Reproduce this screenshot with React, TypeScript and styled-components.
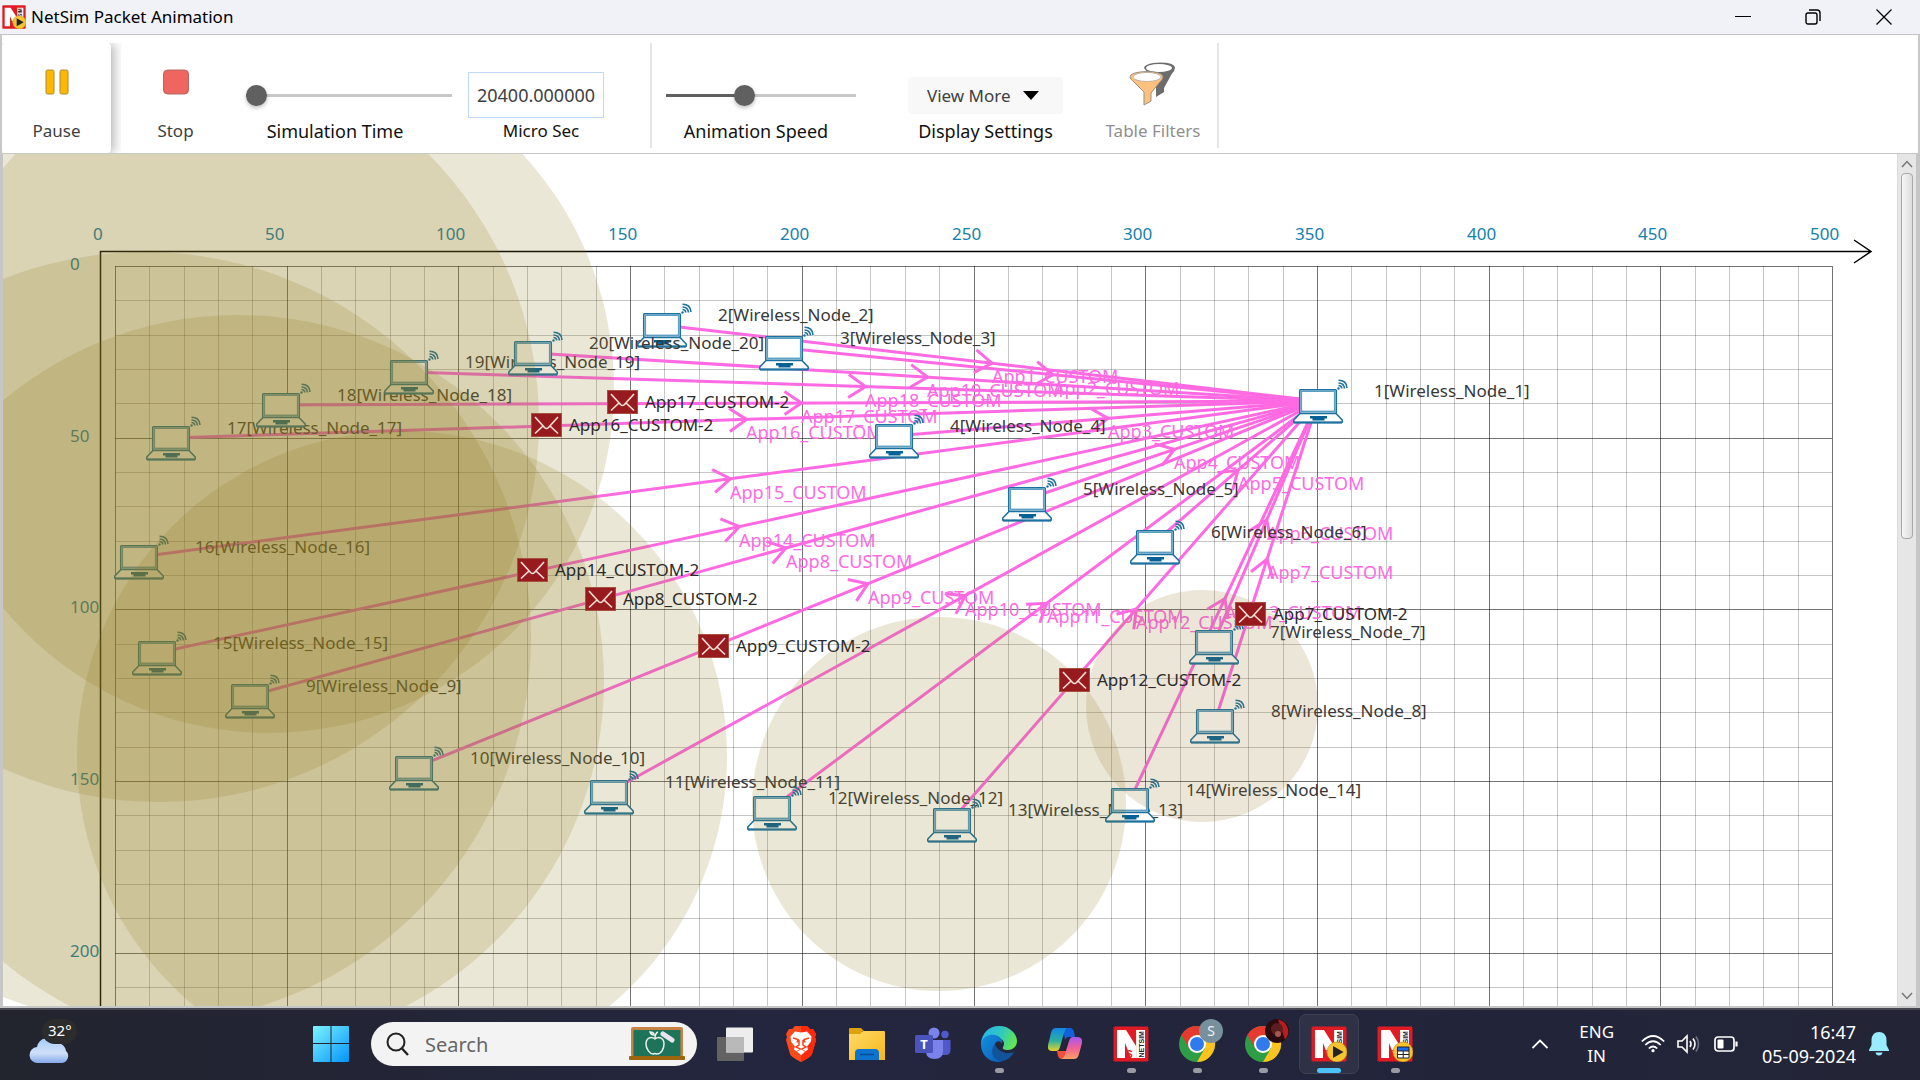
import React from "react";
import styled, { createGlobalStyle } from "styled-components";

const Global = createGlobalStyle`
  * { box-sizing: border-box; }
  body { margin: 0; font-family: "Noto Sans", "Open Sans", sans-serif; font-size: 17px; color: #1a1a1a; overflow: hidden; }
  button, input, select { font: inherit; color: inherit; }
`;

const Screen = styled.div`
  display: flex;
  flex-direction: column;
  height: 100vh;
  background: #fff;
`;

/* ---------- title bar ---------- */

const TitleBar = styled.header`
  display: flex;
  align-items: center;
  height: 35px;
  padding-left: 2px;
  background: #f0f2f8;
  border-bottom: 1px solid #c4c4c8;
`;

const Title = styled.h1`
  flex: 1;
  margin: 0 0 0 5px;
  font-size: 17px;
  line-height: 24px;
  font-weight: 400;
  color: #000;
`;

const WindowButton = styled.button`
  display: grid;
  place-items: center;
  width: 70px;
  height: 34px;
  padding: 0;
  border: 0;
  background: none;
  &:last-child { width: 72px; }
`;

/* ---------- toolbar ---------- */

const Toolbar = styled.section`
  display: flex;
  height: 119px;
  padding-top: 8px;
  border: solid #c8c8c8;
  border-width: 0 2px 1px 2px;
  background: #fff;
`;

const ToolButton = styled.button<{ $raised?: boolean; $wide?: boolean }>`
  display: flex;
  flex-direction: column;
  align-items: center;
  justify-content: space-between;
  width: ${(p) => (p.$wide ? 128 : 109)}px;
  padding: 18px 0 10px;
  border: 0;
  border-radius: 4px;
  background: #fff;
  color: #404040;
  line-height: 24px;
  box-shadow: ${(p) => (p.$raised ? "3px 0 12px rgba(0, 0, 0, 0.3)" : "none")};
  clip-path: inset(0 -12px 0 0);
  &:disabled { color: #8f8f8f; }
`;

const ToolCell = styled.div<{ $gap: number }>`
  display: flex;
  margin-left: ${(p) => p.$gap}px;
`;

const Field = styled.div<{ $width: number; $gap: number }>`
  display: flex;
  flex-direction: column;
  justify-content: flex-end;
  width: ${(p) => p.$width}px;
  margin-left: ${(p) => p.$gap}px;
  padding-bottom: 10px;
`;

const Control = styled.div`
  display: grid;
  align-items: center;
  height: 48px;
`;

const Caption = styled.label<{ $left?: number; $right?: number; $small?: boolean }>`
  padding: 0 ${(p) => p.$right || 0}px 0 ${(p) => p.$left || 0}px;
  font-size: ${(p) => (p.$small ? 17 : 18)}px;
  line-height: 24px;
  text-align: center;
  white-space: nowrap;
  color: #111;
`;

const Slider = styled.input<{ $fill: number }>`
  appearance: none;
  width: 100%;
  height: 22px;
  margin: 0;
  background: linear-gradient(
      to right,
      #606060 ${(p) => p.$fill}%,
      #c8c8c8 ${(p) => p.$fill}%
    )
    center / 100% 3px no-repeat;
  &::-webkit-slider-thumb {
    appearance: none;
    width: 21px;
    height: 21px;
    border-radius: 50%;
    background: #606060;
    box-shadow: 0 2px 4px rgba(0, 0, 0, 0.25);
  }
`;

const TimeInput = styled.input`
  width: 100%;
  height: 46px;
  padding: 0;
  border: 1px solid #c0d8fb;
  background: #fff;
  color: #404040;
  font-size: 18px;
  text-align: center;
`;

const SelectBox = styled.div`
  display: grid;
  grid-template-columns: 1fr 40px;
  align-items: center;
  height: 37px;
  border-radius: 4px;
  background: #f8f8f8;
`;

const Select = styled.select`
  grid-area: 1 / 1 / 2 / 3;
  height: 37px;
  padding: 0 0 0 19px;
  border: 0;
  background: none;
  appearance: none;
  color: #404040;
`;

const SelectArrow = styled.svg`
  grid-area: 1 / 2 / 2 / 3;
  pointer-events: none;
`;

const Divider = styled.div<{ $gap: number }>`
  width: 2px;
  height: 105px;
  margin-left: ${(p) => p.$gap}px;
  background: #e6e6e6;
`;

/* ---------- workspace ---------- */

const Workspace = styled.main`
  display: flex;
  flex: 1;
  min-height: 0;
  border: solid #c6c6c8;
  border-width: 0 4px 2px 3px;
`;

const Canvas = styled.div`
  position: relative;
  flex: 1;
  overflow: hidden;
`;

const Layer = styled.svg`
  position: absolute;
  inset: 0;
  width: 100%;
  height: 100%;
  pointer-events: none;
`;

const Placed = styled.div.attrs<{ $x: number; $y: number }>((p) => ({
  style: { left: p.$x, top: p.$y },
}))<{ $x: number; $y: number }>`
  position: absolute;
  display: flex;
  white-space: nowrap;
  line-height: 24px;
`;

const NodeItem = styled(Placed)`
  gap: 26px;
  color: #383838;
`;

const PacketItem = styled(Placed)`
  gap: 7px;
  color: #2b2b2b;
`;

const LinkLabel = styled(Placed)`
  color: #ff6ae3;
  font-size: 18px;
`;

const AxisLabel = styled(Placed)`
  color: #1480ab;
`;

const ScrollTrack = styled.div`
  display: flex;
  flex-direction: column;
  width: 19px;
  padding: 1px 2px;
  background: #e6e6e6;
  border-left: 1px solid #dadada;
`;

const ScrollButton = styled.button`
  display: grid;
  place-items: center;
  height: 18px;
  padding: 0;
  border: 0;
  background: none;
`;

const ScrollRun = styled.div`
  flex: 1;
`;

const ScrollThumb = styled.div`
  height: 45%;
  margin: 0 1px;
  border: 1px solid #a8a8a8;
  border-radius: 4px;
  background: linear-gradient(to right, #f6f6f6, #dcdcdc);
`;

/* ---------- taskbar ---------- */

const Taskbar = styled.footer`
  display: flex;
  align-items: center;
  height: 72px;
  padding: 0 31px 2px 28px;
  background: linear-gradient(to right, #22242e, #24263f 40%, #22243a 80%, #232536);
  border-top: 2px solid #45464f;
  color: #fff;
`;

const Weather = styled.button`
  width: 270px;
  padding: 0;
  border: 0;
  background: none;
  text-align: left;
`;

const TaskCell = styled.button<{ $active?: boolean }>`
  display: flex;
  position: relative;
  align-items: center;
  justify-content: center;
  width: 60px;
  height: 60px;
  margin: 0 3px;
  padding: 0;
  border: 1px solid ${(p) => (p.$active ? "#3e4052" : "transparent")};
  border-radius: 7px;
  background: ${(p) => (p.$active ? "#2f3146" : "none")};
`;

const Indicator = styled.span<{ $active?: boolean }>`
  position: absolute;
  bottom: 0;
  width: ${(p) => (p.$active ? 24 : 9)}px;
  height: 5px;
  border-radius: 3px;
  background: ${(p) => (p.$active ? "#4cc2ff" : "#9a9aa4")};
`;

const Search = styled.label`
  display: flex;
  align-items: center;
  width: 326px;
  height: 44px;
  margin: 0 5px 0 7px;
  padding: 0 12px 0 15px;
  border-radius: 22px;
  background: #f3f3f3;
`;

const SearchInput = styled.input`
  flex: 1;
  min-width: 0;
  margin-left: 16px;
  padding: 0;
  border: 0;
  background: none;
  font-size: 20px;
  &::placeholder { color: #666; opacity: 1; }
`;

const Tray = styled.div`
  display: flex;
  align-items: center;
  margin-left: auto;
`;

const TrayButton = styled.button<{ $gap?: number }>`
  display: flex;
  align-items: center;
  margin: 0 0 0 ${(p) => p.$gap || 0}px;
  padding: 0;
  border: 0;
  background: none;
  color: #fff;
`;

const TwoLines = styled.span<{ $right?: boolean }>`
  display: block;
  font-size: ${(p) => (p.$right ? 18 : 17)}px;
  line-height: 24px;
  white-space: pre;
  text-align: ${(p) => (p.$right ? "right" : "center")};
`;

/* ---------- data ---------- */

type Point = { x: number; y: number };

// Screen-top centre of every laptop, in canvas pixels.
const NODES: Point[] = [
  { x: 1315, y: 235 },
  { x: 659, y: 159 },
  { x: 781, y: 182 },
  { x: 891, y: 270 },
  { x: 1024, y: 333 },
  { x: 1152, y: 376 },
  { x: 1211, y: 476 },
  { x: 1212, y: 555 },
  { x: 247, y: 530 },
  { x: 411, y: 602 },
  { x: 606, y: 626 },
  { x: 769, y: 642 },
  { x: 949, y: 654 },
  { x: 1127, y: 634 },
  { x: 154, y: 487 },
  { x: 136, y: 391 },
  { x: 168, y: 272 },
  { x: 278, y: 239 },
  { x: 406, y: 206 },
  { x: 530, y: 187 },
];

const PACKETS = [
  { app: 17, x: 620, y: 248 },
  { app: 16, x: 544, y: 271 },
  { app: 14, x: 530, y: 416 },
  { app: 8, x: 598, y: 445 },
  { app: 9, x: 711, y: 492 },
  { app: 12, x: 1072, y: 526 },
  { app: 7, x: 1248, y: 460 },
];

const RANGES = [
  { x: 266, y: 234, r: 345 },
  { x: 156, y: 268, r: 380 },
  { x: 142, y: 484, r: 386 },
  { x: 235, y: 527, r: 366 },
  { x: 399, y: 602, r: 325 },
  { x: 936, y: 650, r: 187 },
  { x: 1199, y: 552, r: 116, fill: "#94722a" },
];

const GRID = { left: 112, top: 112, step: 34.34, size: 1717 };
const HALF = 12;

function links() {
  const sink = NODES[0];
  return NODES.slice(1).map((n, i) => {
    const angle = Math.atan2(sink.y - n.y, sink.x - n.x);
    return {
      app: i + 1,
      from: n,
      angle: (angle * 180) / Math.PI,
      mid: {
        x: (n.x + sink.x) / 2 + 2 * Math.cos(angle),
        y: (n.y + sink.y) / 2 + HALF + 2 * Math.sin(angle),
      },
    };
  });
}

/* ---------- canvas drawings ---------- */

function Laptop() {
  return (
    <svg width="60" height="46" viewBox="0 0 60 46" fill="none" stroke="#1b719f" aria-hidden="true">
      <path d="M12 34.500 5.800 41v1.700q0 .8.800.8h46.800q.8 0 .8-.8V41L48 34.500z" fill="#fff" strokeWidth="1.600" />
      <path d="M6 43.500h48" strokeWidth="1.800" />
      <rect x="11.700" y="10.700" width="36.600" height="23.600" rx=".8" fill="#fff" strokeWidth="1.500" />
      <rect x="13.300" y="12.200" width="33.400" height="20.200" stroke="#5d9fc0" strokeWidth="1.600" />
      <path d="M22 37h17v2.500h-2.500v2h-12v-2H22z" fill="#066296" stroke="none" />
      <circle cx="50.500" cy="9.500" r="1.200" fill="#1b719f" stroke="none" />
      <path d="M50.500 6.500q3 0 3.300 3M50.500 4q5.500 0 6 5.500M50.500 1.300Q58.500 1.300 59 9" strokeWidth="1.600" />
    </svg>
  );
}

function Mail() {
  return (
    <svg width="31" height="24" viewBox="0 0 31 24" aria-hidden="true">
      <rect x=".5" y=".5" width="30" height="23" fill="#971b1e" stroke="#a8503f" />
      <path d="M4 4l9.500 10.500q2 2 4 0L27 4M4 20.500l8.500-8M27 20.500l-8.500-8" fill="none" stroke="#f3ddd4" strokeWidth="1.700" />
    </svg>
  );
}

function Plane() {
  const steps = Array.from({ length: 51 }, (_, i) => i);
  const right = GRID.left + GRID.size;
  const bottom = GRID.top + GRID.size;
  return (
    <Layer aria-hidden="true">
      {steps.map((i) => {
        const major = i % 5 === 0;
        const x = Math.round(GRID.left + i * GRID.step) + 0.5;
        const y = Math.round(GRID.top + i * GRID.step) + 0.5;
        const ink = major ? 0.55 : 0.22;
        return (
          <g key={i} stroke="#000" strokeOpacity={ink}>
            <path d={`M${x} ${GRID.top}V${bottom}`} />
            <path d={`M${GRID.left} ${y}H${right}`} />
          </g>
        );
      })}
      <path d="M97.500 2000V97.500H1867M1851 86l17 11.500L1851 109" fill="none" stroke="#000" strokeWidth="1.500" />
    </Layer>
  );
}

function Links() {
  return (
    <Layer aria-hidden="true">
      <g fill="none" stroke="#ff6ae3" strokeWidth="3">
        {links().map((l) => (
          <g key={l.app}>
            <line x1={l.from.x} y1={l.from.y + HALF} x2={NODES[0].x} y2={NODES[0].y + HALF} />
            <path d="M-17-11.500 0 0-17 11.500" transform={`translate(${l.mid.x} ${l.mid.y}) rotate(${l.angle})`} />
          </g>
        ))}
      </g>
    </Layer>
  );
}

function Ranges() {
  return (
    <Layer aria-hidden="true">
      {RANGES.map((c) => (
        <circle key={c.x} cx={c.x} cy={c.y} r={c.r} fill={c.fill || "#8f791a"} fillOpacity="0.18" />
      ))}
    </Layer>
  );
}

/* ---------- logos ---------- */

function NetSim({ size, badge }: { size: number; badge?: "play" | "table" }) {
  return (
    <svg width={size} height={size} viewBox="0 0 36 36" aria-hidden="true">
      <rect x=".5" y=".5" width="35" height="35" rx="1.500" fill="#e01b24" />
      <path d="M4 4h9l10 16V4h9v28H18L12 17v15H4z" fill="#fff" />
      <path d="M23.500 4v28" stroke="#d9d9d9" strokeWidth=".6" />
      <text transform="translate(30.500 31.500) rotate(-90)" fontSize="7" fontWeight="700" fontFamily="Liberation Sans, sans-serif" fill="#222">
        NETSIM
      </text>
      <text x="13" y="32" fontSize="10" fontWeight="700" fontFamily="Liberation Sans, sans-serif" fill="#e01b24">
        S
      </text>
      {badge && <circle cx="26" cy="26" r="10" fill="#f5c431" stroke="#b98a13" strokeWidth=".6" />}
      {badge === "play" && <path d="M22 20l10.500 6L22 32z" fill="#222" />}
      {badge === "table" && (
        <g>
          <rect x="20" y="20.500" width="12.500" height="12" rx="1" fill="#222" />
          <rect x="21" y="21.500" width="10.500" height="3" fill="#1b6cf2" />
          <path d="M21 25.500h4.700v2.500H21zM26.700 25.500h4.800v2.500h-4.800zM21 29h4.700v2.500H21zM26.700 29h4.800v2.500h-4.800z" fill="#fff" />
        </g>
      )}
    </svg>
  );
}

function CloudWeather() {
  return (
    <svg width="52" height="46" viewBox="0 0 52 46" role="img" aria-label="Weather">
      <defs>
        <linearGradient id="cloud" x1="0" y1="0" x2="0" y2="1">
          <stop offset="0" stopColor="#a9cbfb" />
          <stop offset=".6" stopColor="#cfdff8" />
          <stop offset="1" stopColor="#86a9ea" />
        </linearGradient>
      </defs>
      <circle cx="29" cy="31" r="7" fill="#e8711c" />
      <path d="M10 44a8 8 0 0 1-1-16 11 11 0 0 1 20-4 9 9 0 0 1 9 8 7 7 0 0 1-4 12z" fill="url(#cloud)" />
      <rect x="14" y="0" width="35" height="25" rx="12.500" fill="#2c2c2c" />
      <text x="20" y="17" fontSize="15" fill="#fff">
        32°
      </text>
    </svg>
  );
}

function WindowsLogo() {
  return (
    <svg width="36" height="36" viewBox="0 0 36 36" aria-hidden="true">
      <defs>
        <linearGradient id="win" x1="0" y1="0" x2="1" y2="1">
          <stop offset="0" stopColor="#7df3ff" />
          <stop offset="1" stopColor="#0394fb" />
        </linearGradient>
      </defs>
      <path d="M1 0h16.500v17H0V1q0-1 1-1zM18.500 0H35q1 0 1 1v16H18.500zM0 18h17.500v18H1q-1 0-1-1zM18.500 18H36v17q0 1-1 1H18.500z" fill="url(#win)" />
    </svg>
  );
}

function Blackboard() {
  return (
    <svg width="56" height="34" viewBox="0 0 56 34" aria-hidden="true">
      <rect x="2" y="0" width="52" height="30" rx="2" fill="#c98246" />
      <rect x="4.500" y="3" width="47" height="26" fill="#1f7358" />
      <rect x="0" y="29" width="56" height="4" rx="1" fill="#9c6510" />
      <path d="M26 12c-4-3-9-1-9 5 0 5 4 10 7 10l2-.5 2 .5c4 0 7-5 7-10 0-6-5-8-9-5zM26 11c0-3 1-5 3-6M25 8q-3 0-4-3 4 0 4 3z" fill="none" stroke="#e9f3ee" strokeWidth="1.500" />
      <path d="M34 7l9 6" stroke="#e8e4f0" strokeWidth="5" strokeLinecap="round" />
    </svg>
  );
}

function TaskView() {
  return (
    <svg width="36" height="36" viewBox="0 0 36 36" aria-hidden="true">
      <rect x="0" y="11" width="27" height="24" rx="1" fill="#626262" />
      <rect x="9" y="1.500" width="27" height="25" rx="1" fill="#ededed" />
      <rect x="9" y="11" width="18" height="15.500" fill="#b9b9b9" />
    </svg>
  );
}

function Brave() {
  return (
    <svg width="30" height="36" viewBox="0 0 30 36" aria-hidden="true">
      <path d="M9 0h12l3 3h3l3 5-1 3 1 3-4 14q-1 3-11 8-10-5-11-8L0 14l1-3-1-3 3-5h3z" fill="#fb4b1c" />
      <path d="M15 0h6l3 3h3l3 5-1 3 1 3-4 14q-1 3-11 8z" fill="#ff2a0c" />
      <path d="M15 6.500 21 5.500l4.500 5-.5 5-4 5 1 3-7 5-7-5 1-3-4-5-.5-5L9 5.500z" fill="#fff" />
      <path d="M7 12l5 1.500-1 3M23 12l-5 1.500 1 3M13 14v5l-3 2 5 2.500 5-2.500-3-2v-5M15 24v3" fill="none" stroke="#f8431a" strokeWidth="1.500" />
      <path d="M10.500 25.500 15 23l4.500 2.500L15 29.500z" fill="#fff" stroke="#f8431a" strokeWidth=".8" />
    </svg>
  );
}

function Folder() {
  return (
    <svg width="36" height="34" viewBox="0 0 36 34" aria-hidden="true">
      <defs>
        <linearGradient id="folder" x1="0" y1="0" x2="1" y2="1">
          <stop offset="0" stopColor="#ffdb6b" />
          <stop offset="1" stopColor="#f7b618" />
        </linearGradient>
      </defs>
      <path d="M0 2q0-1 1-1h11l3 3h-2v6H0z" fill="#dfa008" />
      <path d="M0 7h11l3-3h21q1 0 1 1v28H0z" fill="url(#folder)" />
      <path d="M6 33v-7q0-4 4-4h16q4 0 4 4v7z" fill="#0c74cf" />
      <path d="M11 27.500h14" stroke="#0a4c92" strokeWidth="1.500" />
    </svg>
  );
}

function Teams() {
  return (
    <svg width="36" height="34" viewBox="0 0 36 34" aria-hidden="true">
      <circle cx="19" cy="6" r="5.500" fill="#7b83eb" />
      <circle cx="30" cy="7.500" r="3.700" fill="#5059c9" />
      <path d="M26 13h9.500v10q0 5-5 5H26z" fill="#5059c9" />
      <path d="M11 13h17v11q0 8-8.500 8T11 24z" fill="#7b83eb" />
      <rect x="0" y="8" width="18" height="18" rx="1.500" fill="#4b53bc" />
      <text x="9" y="22" fontSize="13" fontWeight="700" textAnchor="middle" fill="#fff">
        T
      </text>
    </svg>
  );
}

function Edge() {
  return (
    <svg width="36" height="36" viewBox="0 0 36 36" aria-hidden="true">
      <defs>
        <linearGradient id="edgeTop" x1="0" y1=".3" x2="1" y2=".6">
          <stop offset="0" stopColor="#2bb5ee" />
          <stop offset=".5" stopColor="#2fc8c0" />
          <stop offset="1" stopColor="#66e84a" />
        </linearGradient>
        <linearGradient id="edgeLow" x1="0" y1="0" x2="1" y2="1">
          <stop offset="0" stopColor="#1490df" />
          <stop offset="1" stopColor="#0a5cb8" />
        </linearGradient>
      </defs>
      <path d="M0 17C1 7 8 0 18 0c11 0 18 8 18 15 0 6-5 9-9 9-4 0-6-1-5-3 3-5-1-9-6-9-8 0-15 4-16 5z" fill="url(#edgeTop)" />
      <path d="M0 17c2-7 9-9 14-8 5 1 8 5 7 9-1-3-5-4-7 0-3 7 2 14 8 17-12 4-23-6-22-18z" fill="url(#edgeLow)" />
      <path d="M14 18c-5 5-4 17 8 17 5-1 9-5 11-9-3 1-7 2-11 0-5-2-7-5-8-8z" fill="#11549c" />
    </svg>
  );
}

function Copilot() {
  return (
    <svg width="34" height="32" viewBox="0 0 34 32" aria-hidden="true">
      <defs>
        <linearGradient id="copA" x1="0" y1="0" x2="0" y2="1">
          <stop offset="0" stopColor="#1186e8" />
          <stop offset=".55" stopColor="#2bb0a0" />
          <stop offset="1" stopColor="#e8d32a" />
        </linearGradient>
        <linearGradient id="copB" x1="0" y1="0" x2="0" y2="1">
          <stop offset="0" stopColor="#a558f0" />
          <stop offset=".5" stopColor="#f0609a" />
          <stop offset="1" stopColor="#fba060" />
        </linearGradient>
      </defs>
      <path d="M15 0h7q3 0 4 4l1 5h-6q-3 0-4 3z" fill="#1560d8" />
      <path d="M9 23h10l-3 6q-1 2-3 2-2 0-3-3z" fill="#f0503c" />
      <path d="M8 0h11q-2 1-3 5l-4 14q-1 4-4 4H4q-5 0-4-6L3 5q1-5 5-5z" fill="url(#copA)" />
      <path d="M26 31H13q3-1 4-5l4-13q1-4 4-4h4q6 0 5 6l-3 11q-1 5-5 5z" fill="url(#copB)" />
    </svg>
  );
}

const ChromeSvg = styled.svg`
  overflow: visible;
`;

function Chrome({ avatar }: { avatar: "letter" | "photo" }) {
  return (
    <ChromeSvg width="36" height="36" viewBox="0 0 36 36" aria-hidden="true">
      <circle cx="18" cy="18" r="18" fill="#2e9e46" />
      <path d="M2.400 9A18 18 0 0 1 33.600 9L18 9.500 10.200 22.500z" fill="#e53a2d" />
      <path d="M33.600 9A18 18 0 0 1 18 36L25.800 22.500 18 9z" fill="#fcc31e" />
      <circle cx="18" cy="18" r="9" fill="#fff" />
      <circle cx="18" cy="18" r="7" fill="#2f7bee" />
      {avatar === "letter" ? (
        <g>
          <circle cx="32" cy="5" r="12" fill="#78909c" />
          <text x="32" y="10" fontSize="14" textAnchor="middle" fill="#eef3f5">
            S
          </text>
        </g>
      ) : (
        <g>
          <circle cx="32" cy="5" r="12" fill="#2a0c10" />
          <path d="M33-6.500a12 12 0 0 1 7 20z" fill="#b81c1c" />
          <circle cx="32" cy="3" r="6" fill="#5b1e20" />
          <circle cx="33" cy="8" r="3" fill="#a15a50" />
        </g>
      )}
    </ChromeSvg>
  );
}

function Funnel() {
  return (
    <svg width="48" height="46" viewBox="0 0 48 46" aria-hidden="true">
      <path d="M15 7q1-5 16-5.500Q45 1.500 46 6.500q0 3-3 6L35 27v4l-8 5V22z" fill="#6c6c6c" />
      <ellipse cx="30" cy="7" rx="13" ry="4" fill="#fff" />
      <path d="M1 16q0-5 17-5.500Q34 11 34 16q0 2-4 6l-8 10v8l-7 4V31L5 21q-4-3-4-5z" fill="#ffc17d" stroke="#9a8f84" />
      <ellipse cx="18" cy="16" rx="14" ry="4.500" fill="#fff" stroke="#b3a596" strokeWidth=".8" />
    </svg>
  );
}

function Chevron({ flip }: { flip?: boolean }) {
  return (
    <svg width="12" height="8" viewBox="0 0 12 8" aria-hidden="true">
      <path d={flip ? "M1 1l5 5.500L11 1" : "M1 7l5-5.500L11 7"} fill="none" stroke="#777" strokeWidth="1.500" />
    </svg>
  );
}

/* ---------- page ---------- */

const TASKS = [
  { name: "Task View", icon: <TaskView /> },
  { name: "Brave", icon: <Brave /> },
  { name: "File Explorer", icon: <Folder /> },
  { name: "Teams", icon: <Teams /> },
  { name: "Edge", icon: <Edge />, running: true },
  { name: "Copilot", icon: <Copilot /> },
  { name: "NetSim", icon: <NetSim size={36} />, running: true },
  { name: "Chrome, S", icon: <Chrome avatar="letter" />, running: true },
  { name: "Chrome", icon: <Chrome avatar="photo" />, running: true },
  { name: "NetSim Packet Animation", icon: <NetSim size={36} badge="play" />, running: true, active: true },
  { name: "NetSim Results", icon: <NetSim size={36} badge="table" />, running: true },
];

export default function App() {
  const ticks = Array.from({ length: 11 }, (_, i) => i);
  return (
    <Screen>
      <Global />
      <TitleBar>
        <NetSim size={24} badge="play" />
        <Title>NetSim Packet Animation</Title>
        <WindowButton aria-label="Minimize">
          <svg width="16" height="16" viewBox="0 0 16 16" stroke="#000"><path d="M0 7.500h16" /></svg>
        </WindowButton>
        <WindowButton aria-label="Restore">
          <svg width="16" height="16" viewBox="0 0 16 16" fill="none" stroke="#000" strokeWidth="1.400">
            <rect x="1" y="4" width="11" height="11" rx="2" />
            <path d="M4 1h8q3 0 3 3v8" />
          </svg>
        </WindowButton>
        <WindowButton aria-label="Close">
          <svg width="16" height="16" viewBox="0 0 16 16" stroke="#000" strokeWidth="1.300"><path d="M.5.500l15 15M15.500.500l-15 15" /></svg>
        </WindowButton>
      </TitleBar>

      <Toolbar>
        <ToolButton $raised>
          <svg width="24" height="42" viewBox="0 0 24 42" fill="#fdb900" stroke="#a98a3a" aria-hidden="true">
            <rect x="1" y="9" width="8" height="24" rx="1.500" />
            <rect x="15" y="9" width="8" height="24" rx="1.500" />
          </svg>
          Pause
        </ToolButton>
        <ToolCell $gap={10}>
          <ToolButton>
            <svg width="26" height="42" viewBox="0 0 26 42" aria-hidden="true">
              <rect x=".5" y="9" width="25" height="24" rx="4" fill="#ef6560" stroke="#b06a66" />
            </svg>
            Stop
          </ToolButton>
        </ToolCell>
        <Field $width={206} $gap={16}>
          <Control><Slider id="sim" type="range" min="0" max="100" defaultValue="0" $fill={2} /></Control>
          <Caption htmlFor="sim" $right={28}>Simulation Time</Caption>
        </Field>
        <Field $width={136} $gap={16}>
          <Control><TimeInput id="micro" type="text" defaultValue="20400.000000" /></Control>
          <Caption htmlFor="micro" $left={10} $small>Micro Sec</Caption>
        </Field>
        <Divider $gap={46} />
        <Field $width={190} $gap={14}>
          <Control><Slider id="speed" type="range" min="0" max="100" defaultValue="40" $fill={41} /></Control>
          <Caption htmlFor="speed" $right={10}>Animation Speed</Caption>
        </Field>
        <Field $width={155} $gap={52}>
          <Control>
            <SelectBox>
              <Select id="display" defaultValue="more"><option value="more">View More</option></Select>
              <SelectArrow width="16" height="9" viewBox="0 0 16 9" aria-hidden="true"><path d="M0 0h16L8 9z" /></SelectArrow>
            </SelectBox>
          </Control>
          <Caption htmlFor="display">Display Settings</Caption>
        </Field>
        <ToolCell $gap={26}>
          <ToolButton disabled $wide>
            <Funnel />
            Table Filters
          </ToolButton>
        </ToolCell>
        <Divider $gap={0} />
      </Toolbar>

      <Workspace>
        <Canvas>
          <Plane />
          {ticks.map((i) => (
            <AxisLabel key={`x${i}`} $x={90 + Math.round((i * 1717) / 10)} $y={68}>{i * 50}</AxisLabel>
          ))}
          {ticks.slice(0, 5).map((i) => (
            <AxisLabel key={`y${i}`} $x={67} $y={98 + Math.round((i * 1717) / 10)}>{i * 50}</AxisLabel>
          ))}
          <Links />
          {links().map((l) => (
            <LinkLabel key={l.app} $x={Math.round(l.mid.x)} $y={Math.round(l.mid.y) + 1}>{`App${l.app}_CUSTOM`}</LinkLabel>
          ))}
          {NODES.map((n, i) => (
            <NodeItem key={i} $x={n.x - 30} $y={n.y - 10}>
              <Laptop />
              <span>{`${i + 1}[Wireless_Node_${i + 1}]`}</span>
            </NodeItem>
          ))}
          <Ranges />
          {PACKETS.map((p) => (
            <PacketItem key={p.app} $x={p.x - 16} $y={p.y - 12}>
              <Mail />
              <span>{`App${p.app}_CUSTOM-2`}</span>
            </PacketItem>
          ))}
        </Canvas>
        <ScrollTrack>
          <ScrollButton aria-label="Scroll up"><Chevron /></ScrollButton>
          <ScrollRun><ScrollThumb /></ScrollRun>
          <ScrollButton aria-label="Scroll down"><Chevron flip /></ScrollButton>
        </ScrollTrack>
      </Workspace>

      <Taskbar>
        <Weather><CloudWeather /></Weather>
        <TaskCell aria-label="Start"><WindowsLogo /></TaskCell>
        <Search>
          <svg width="23" height="24" viewBox="0 0 23 24" fill="none" stroke="#222" strokeWidth="2" aria-hidden="true">
            <circle cx="10" cy="10" r="8.500" />
            <path d="M16 16.500l6 6.500" strokeWidth="2.400" />
          </svg>
          <SearchInput type="text" placeholder="Search" aria-label="Search" />
          <Blackboard />
        </Search>
        {TASKS.map((t) => (
          <TaskCell key={t.name} aria-label={t.name} $active={t.active}>
            {t.icon}
            {t.running && <Indicator $active={t.active} />}
          </TaskCell>
        ))}
        <Tray>
          <TrayButton aria-label="Hidden icons">
            <svg width="16" height="10" viewBox="0 0 16 10" fill="none" stroke="#fff" strokeWidth="1.800"><path d="M.5 9 8 1.500 15.500 9" /></svg>
          </TrayButton>
          <TrayButton $gap={31}><TwoLines>{"ENG\nIN"}</TwoLines></TrayButton>
          <TrayButton $gap={27} aria-label="Network">
            <svg width="24" height="18" viewBox="0 0 24 18" fill="none" stroke="#fff" strokeWidth="1.700">
              <path d="M.8 6.500q11.200-11 22.400 0M4.300 10q7.700-7.500 15.400 0M7.800 13.500q4.200-4 8.400 0" />
              <circle cx="12" cy="15.700" r="1.600" fill="#fff" stroke="none" />
            </svg>
          </TrayButton>
          <TrayButton $gap={12} aria-label="Volume">
            <svg width="24" height="20" viewBox="0 0 24 20" fill="none" stroke="#fff" strokeWidth="1.600">
              <path d="M1 7h4l5-5v16l-5-5H1z" />
              <path d="M13 7q2 3 0 6M16 4.500q4 5.500 0 11" />
              <path d="M19 2.500q5 7.500 0 15" stroke="#6c6e80" />
            </svg>
          </TrayButton>
          <TrayButton $gap={13} aria-label="Battery">
            <svg width="24" height="16" viewBox="0 0 24 16" fill="none" stroke="#fff" strokeWidth="1.700">
              <rect x="1" y="1" width="19" height="14" rx="3" />
              <rect x="3.500" y="3.500" width="6" height="9" rx="1" fill="#fff" stroke="none" />
              <path d="M22.500 5.500v5" strokeWidth="2.200" />
            </svg>
          </TrayButton>
          <TrayButton $gap={24}><TwoLines $right>{"16:47\n05-09-2024"}</TwoLines></TrayButton>
          <TrayButton $gap={13} aria-label="Notifications">
            <svg width="20" height="24" viewBox="0 0 20 24" fill="#99ebff"><path d="M10 0q7 0 7.500 8v5l2.500 5v1H0v-1l2.500-5V8Q3 0 10 0zM6.500 20.500h7q-.5 3-3.500 3t-3.500-3z" /></svg>
          </TrayButton>
        </Tray>
      </Taskbar>
    </Screen>
  );
}
